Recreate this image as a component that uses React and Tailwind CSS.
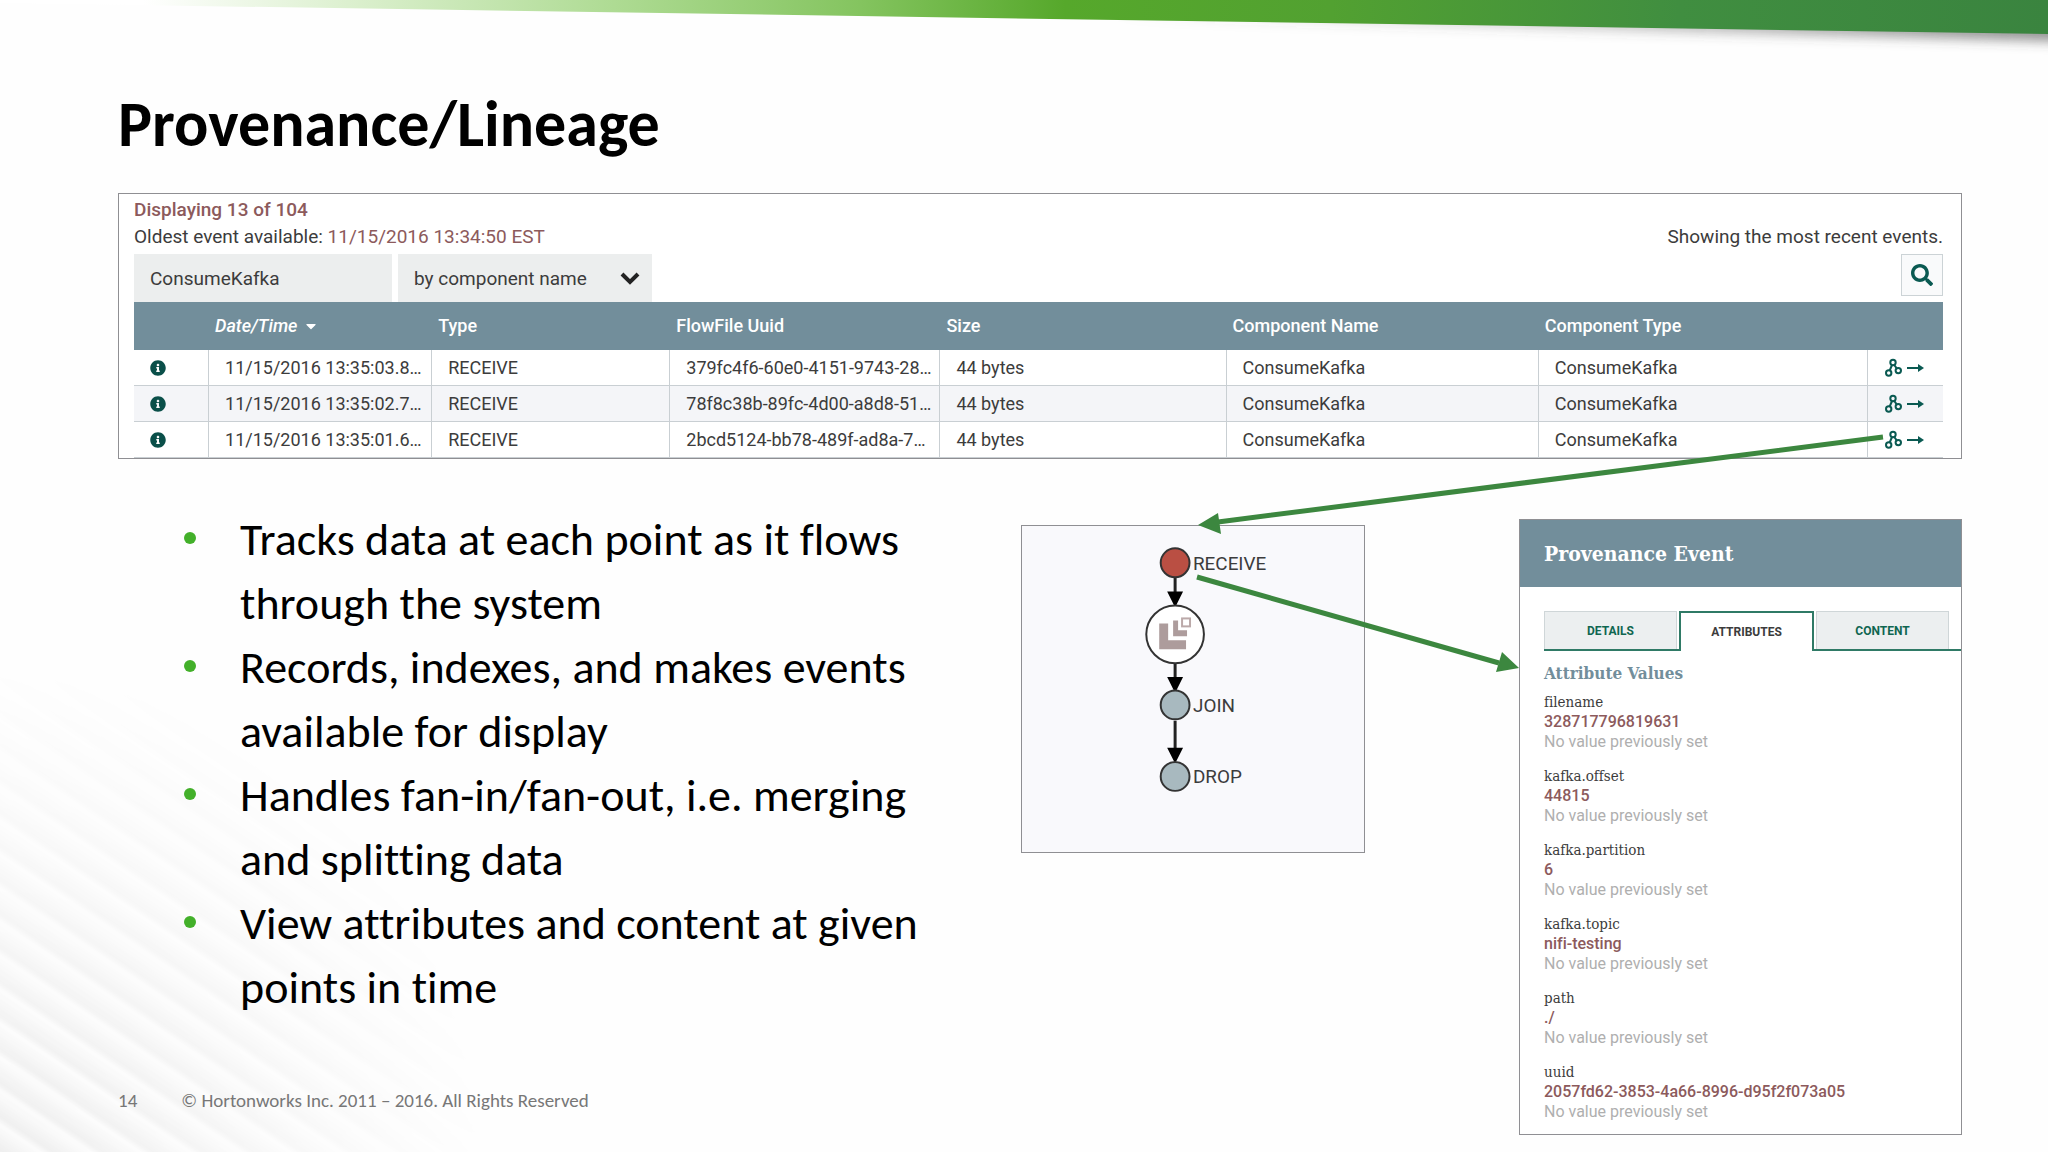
import { FaInfoCircle, FaSearch, FaCaretDown } from 'react-icons/fa'

const EVENTS = [
  { time: '11/15/2016 13:35:03.8…', type: 'RECEIVE', uuid: '379fc4f6-60e0-4151-9743-28…', size: '44 bytes', name: 'ConsumeKafka', component: 'ConsumeKafka' },
  { time: '11/15/2016 13:35:02.7…', type: 'RECEIVE', uuid: '78f8c38b-89fc-4d00-a8d8-51…', size: '44 bytes', name: 'ConsumeKafka', component: 'ConsumeKafka' },
  { time: '11/15/2016 13:35:01.6…', type: 'RECEIVE', uuid: '2bcd5124-bb78-489f-ad8a-7…', size: '44 bytes', name: 'ConsumeKafka', component: 'ConsumeKafka' },
]

const POINTS = [
  'Tracks data at each point as it flows through the system',
  'Records, indexes, and makes events available for display',
  'Handles fan-in/fan-out, i.e. merging and splitting data',
  'View attributes and content at given points in time',
]

const ATTRIBUTES = [
  ['filename', '328717796819631'],
  ['kafka.offset', '44815'],
  ['kafka.partition', '6'],
  ['kafka.topic', 'nifi-testing'],
  ['path', './'],
  ['uuid', '2057fd62-3853-4a66-8996-d95f2f073a05'],
]

function Backdrop() {
  return (
    <>
      <svg className="absolute inset-x-0 top-0 w-full h-[72px]" viewBox="0 0 2048 72" preserveAspectRatio="none" aria-hidden="true">
        <defs>
          <linearGradient id="band" x1="0" x2="1" y1="0" y2="0">
            <stop offset="0.07" stopColor="#fff" />
            <stop offset="0.17" stopColor="#dcf0cf" />
            <stop offset="0.3" stopColor="#aedb93" />
            <stop offset="0.42" stopColor="#84c45f" />
            <stop offset="0.52" stopColor="#56a82b" />
            <stop offset="0.65" stopColor="#52a131" />
            <stop offset="0.82" stopColor="#408e40" />
            <stop offset="1" stopColor="#3a843f" />
          </linearGradient>
          <linearGradient id="bandShadow" x1="0" x2="1" y1="0" y2="0">
            <stop offset="0.1" stopColor="#555" stopOpacity="0" />
            <stop offset="1" stopColor="#444" stopOpacity="0.6" />
          </linearGradient>
          <filter id="soften" x="-5%" y="-50%" width="110%" height="200%">
            <feGaussianBlur stdDeviation="6" />
          </filter>
        </defs>
        <polygon points="1000,0 2080,0 2080,42 1000,15" fill="url(#bandShadow)" filter="url(#soften)" />
        <polygon points="0,0 2048,0 2048,34 0,3" fill="url(#band)" />
      </svg>
      <svg className="absolute left-0 bottom-0 w-[520px] h-[500px]" viewBox="0 0 520 500" aria-hidden="true">
        <defs>
          <linearGradient id="stripe" x1="0" x2="0" y1="0" y2="1">
            <stop offset="0" stopColor="#000" stopOpacity="0.01" />
            <stop offset="0.75" stopColor="#000" stopOpacity="0.06" />
            <stop offset="1" stopColor="#000" stopOpacity="0.01" />
          </linearGradient>
          <radialGradient id="corner" gradientUnits="userSpaceOnUse" cx="0" cy="500" r="490">
            <stop offset="0" stopColor="#fff" />
            <stop offset="0.5" stopColor="#888" />
            <stop offset="1" stopColor="#000" />
          </radialGradient>
          <mask id="fade"><rect width="520" height="500" fill="url(#corner)" /></mask>
          <pattern id="stripes" width="1200" height="28" patternUnits="userSpaceOnUse" patternTransform="rotate(34)">
            <rect width="1200" height="28" fill="url(#stripe)" />
          </pattern>
        </defs>
        <rect width="520" height="500" fill="url(#stripes)" mask="url(#fade)" />
      </svg>
    </>
  )
}

function LineageIcon() {
  return (
    <svg width="18" height="20" viewBox="0 0 18 20" fill="none" stroke="#0a5a52" strokeWidth="2" aria-hidden="true">
      <circle cx="9" cy="4.500" r="2.700" />
      <circle cx="4.700" cy="15" r="2.700" />
      <circle cx="14.300" cy="12.600" r="2.700" />
      <path d="M8 7 5.700 12.500M10.300 7l2.400 3.300" />
    </svg>
  )
}

function GoToIcon() {
  return (
    <svg width="18" height="20" viewBox="0 0 18 20" aria-hidden="true">
      <path d="M1 9h11V6l6 4-6 4v-3H1z" fill="#0a5a52" />
    </svg>
  )
}

function EventTable() {
  const td = 'border-r border-b border-[#c9cfd3] pl-4 truncate'
  const th = 'pl-1.5 text-left font-medium'
  return (
    <table className="w-full table-fixed border-separate border-spacing-0 text-lg text-[#3c3c3c]">
      <colgroup>
        <col className="w-[75px]" />
        <col className="w-[223px]" />
        <col className="w-[238px]" />
        <col className="w-[270px]" />
        <col className="w-[286px]" />
        <col className="w-[312px]" />
        <col className="w-[329px]" />
        <col className="w-[75px]" />
      </colgroup>
      <thead className="bg-[#728e9b] text-white">
        <tr className="h-12">
          <th aria-label="Details" />
          <th className={th}>
            <span className="flex items-center gap-1.5 italic">Date/Time <FaCaretDown size={16} /></span>
          </th>
          <th className={th}>Type</th>
          <th className={th}>FlowFile Uuid</th>
          <th className={th}>Size</th>
          <th className={th}>Component Name</th>
          <th className={th}>Component Type</th>
          <th aria-label="Actions" />
        </tr>
      </thead>
      <tbody>
        {EVENTS.map(e => (
          <tr key={e.uuid} className="h-9 even:bg-[#f4f5f8]">
            <td className={td}>
              <button aria-label="View details" className="block text-[#0a4f49]"><FaInfoCircle size={16} /></button>
            </td>
            <td className={td}>{e.time}</td>
            <td className={td}>{e.type}</td>
            <td className={td}>{e.uuid}</td>
            <td className={td}>{e.size}</td>
            <td className={td}>{e.name}</td>
            <td className={td}>{e.component}</td>
            <td className="border-b border-[#c9cfd3] pl-4">
              <div className="flex items-center gap-1">
                <button aria-label="Show lineage"><LineageIcon /></button>
                <button aria-label="Go to component"><GoToIcon /></button>
              </div>
            </td>
          </tr>
        ))}
      </tbody>
    </table>
  )
}

function EventsPanel() {
  return (
    <section className="border border-[#8f8f93] bg-white pl-[15px] pr-[18px] pt-0.5 font-[Roboto,sans-serif] text-[19px] leading-[27px]">
      <p className="font-medium text-[#8c5a5c]">Displaying 13 of 104</p>
      <div className="flex justify-between text-[#3c3c3c]">
        <p>Oldest event available: <span className="text-[#8c5a5c]">11/15/2016 13:34:50 EST</span></p>
        <p>Showing the most recent events.</p>
      </div>
      <div className="flex items-start gap-1.5 mt-1 text-[#3c3c3c]">
        <input aria-label="Filter" defaultValue="ConsumeKafka" className="w-[258px] h-12 bg-[#eceeee] px-4" />
        <div className="relative">
          <select aria-label="Filter by" className="appearance-none w-[254px] h-12 bg-[#eceeee] pl-4">
            <option>by component name</option>
          </select>
          <svg className="absolute right-3 top-4 pointer-events-none" width="20" height="16" viewBox="0 0 20 16" fill="none" stroke="#222" strokeWidth="4" aria-hidden="true">
            <path d="M2 4l8 8 8-8" />
          </svg>
        </div>
        <button aria-label="Search" className="ml-auto flex items-center justify-center w-[42px] h-[42px] border border-[#ccd3d6] bg-[#f9fafb] text-[#0a5a52]">
          <FaSearch size={22} />
        </button>
      </div>
      <EventTable />
    </section>
  )
}

function LineageGraph() {
  return (
    <svg viewBox="0 0 344 328" className="w-[344px] h-[328px] shrink-0 border border-[#8f8f93] bg-[#f9f9fc] font-[Roboto,sans-serif] text-[19px]" role="img" aria-label="Lineage graph">
      <g stroke="#222" strokeWidth="3">
        <path d="M154 51V68M154 138V154M154 196V226" />
      </g>
      <g fill="#000">
        <path d="M146 66h16l-8 16zM146 152h16l-8 16zM146 223h16l-8 16z" />
      </g>
      <g stroke="#333" strokeWidth="2">
        <circle cx="154" cy="37" r="14.500" fill="#ba4f43" />
        <circle cx="154" cy="109" r="29" fill="#fff" />
        <circle cx="154" cy="180" r="14.500" fill="#a8b9bf" />
        <circle cx="154" cy="252" r="14.500" fill="#a8b9bf" />
      </g>
      <path d="M138 98h9v17h18v9h-27zM152 95h5v10h9v6h-14z" fill="#ad9c9c" />
      <rect x="161" y="93" width="8" height="8" fill="none" stroke="#bba9a9" strokeWidth="2" />
      <g fill="#3c3c3c">
        <text x="172" y="44">RECEIVE</text>
        <text x="172" y="187">JOIN</text>
        <text x="172" y="259">DROP</text>
      </g>
    </svg>
  )
}

function ProvenanceEvent() {
  const tab = 'flex-1 h-[38px] border border-b-0 border-[#cfd6d8] bg-[#eceff0] text-[#0f6650]'
  return (
    <section className="w-[443px] shrink-0 border border-[#8f8f93] bg-white text-[#3c3c3c] font-[Roboto,sans-serif]">
      <h2 className="h-[67px] px-6 flex items-center bg-[#728e9b] text-white text-[21px] font-bold font-['Roboto_Slab','DejaVu_Serif_Condensed','DejaVu_Serif',serif]">Provenance Event</h2>
      <div className="pl-6 pt-6 pb-3">
        <div role="tablist" className="flex items-end gap-0.5 pr-3 border-b-2 border-[#2f7a66] text-xs font-bold">
          <button role="tab" aria-selected="false" className={tab}>DETAILS</button>
          <button role="tab" aria-selected="true" className="flex-1 h-10 -mb-0.5 border-2 border-b-0 border-[#2f7a66] bg-white">ATTRIBUTES</button>
          <button role="tab" aria-selected="false" className={tab}>CONTENT</button>
        </div>
        <h3 className="mt-2 text-[17px] leading-7 font-bold text-[#728e9b] font-['Roboto_Slab','DejaVu_Serif_Condensed','DejaVu_Serif',serif]">Attribute Values</h3>
        <dl className="mt-[5px] flex flex-col gap-3.5 text-base leading-5">
          {ATTRIBUTES.map(([name, value]) => (
            <div key={name}>
              <dt className="text-[15px] leading-5 font-['Roboto_Slab','DejaVu_Serif_Condensed','DejaVu_Serif',serif]">{name}</dt>
              <dd className="font-medium text-[#8c5a5c]">{value}</dd>
              <dd className="text-[#afafaf]">No value previously set</dd>
            </div>
          ))}
        </dl>
      </div>
    </section>
  )
}

export default function App() {
  return (
    <div className="relative min-h-screen bg-[#fefefe] overflow-hidden font-[Carlito,Lato,sans-serif] [font-variant-ligatures:none]">
      <Backdrop />
      <main className="relative pl-[118px] pr-[86px] pt-[88px] pb-4">
        <h1 className="mb-[33px] text-[64px] leading-[72px] font-bold text-black">Provenance/Lineage</h1>
        <EventsPanel />
        <div className="flex pt-[60px]">
          <div className="flex-1 flex flex-col">
            <div className="flex justify-between items-start pr-[154px]">
              <ul className="-mt-3 w-[810px] pl-16 text-[46px] leading-[64px] text-black">
                {POINTS.map(p => (
                  <li key={p} className="relative pl-[58px]">
                    <span className="absolute left-0.5 top-[25px] w-3 h-3 rounded-full bg-[#43b02a]" />
                    {p}
                  </li>
                ))}
              </ul>
              <div className="pt-1.5"><LineageGraph /></div>
            </div>
            <footer className="mt-auto mb-5 flex items-baseline gap-[44px] text-[19px] text-[#777]">
              <span>14</span>
              <span>© Hortonworks Inc. 2011 – 2016. All Rights Reserved</span>
            </footer>
          </div>
          <ProvenanceEvent />
        </div>
      </main>
      {/* callout arrows from the table row to the graph, and on to the event */}
      <svg className="absolute inset-0 w-full h-[1152px] pointer-events-none" viewBox="0 0 2048 1152" preserveAspectRatio="none" aria-hidden="true">
        <path d="M1883 437 1218 522M1197 577 1499 663" stroke="#3c873f" strokeWidth="5" />
        <path d="M1198 525l20-12 3 21zM1519 668l-23 4 6-20z" fill="#3c873f" />
      </svg>
    </div>
  )
}
